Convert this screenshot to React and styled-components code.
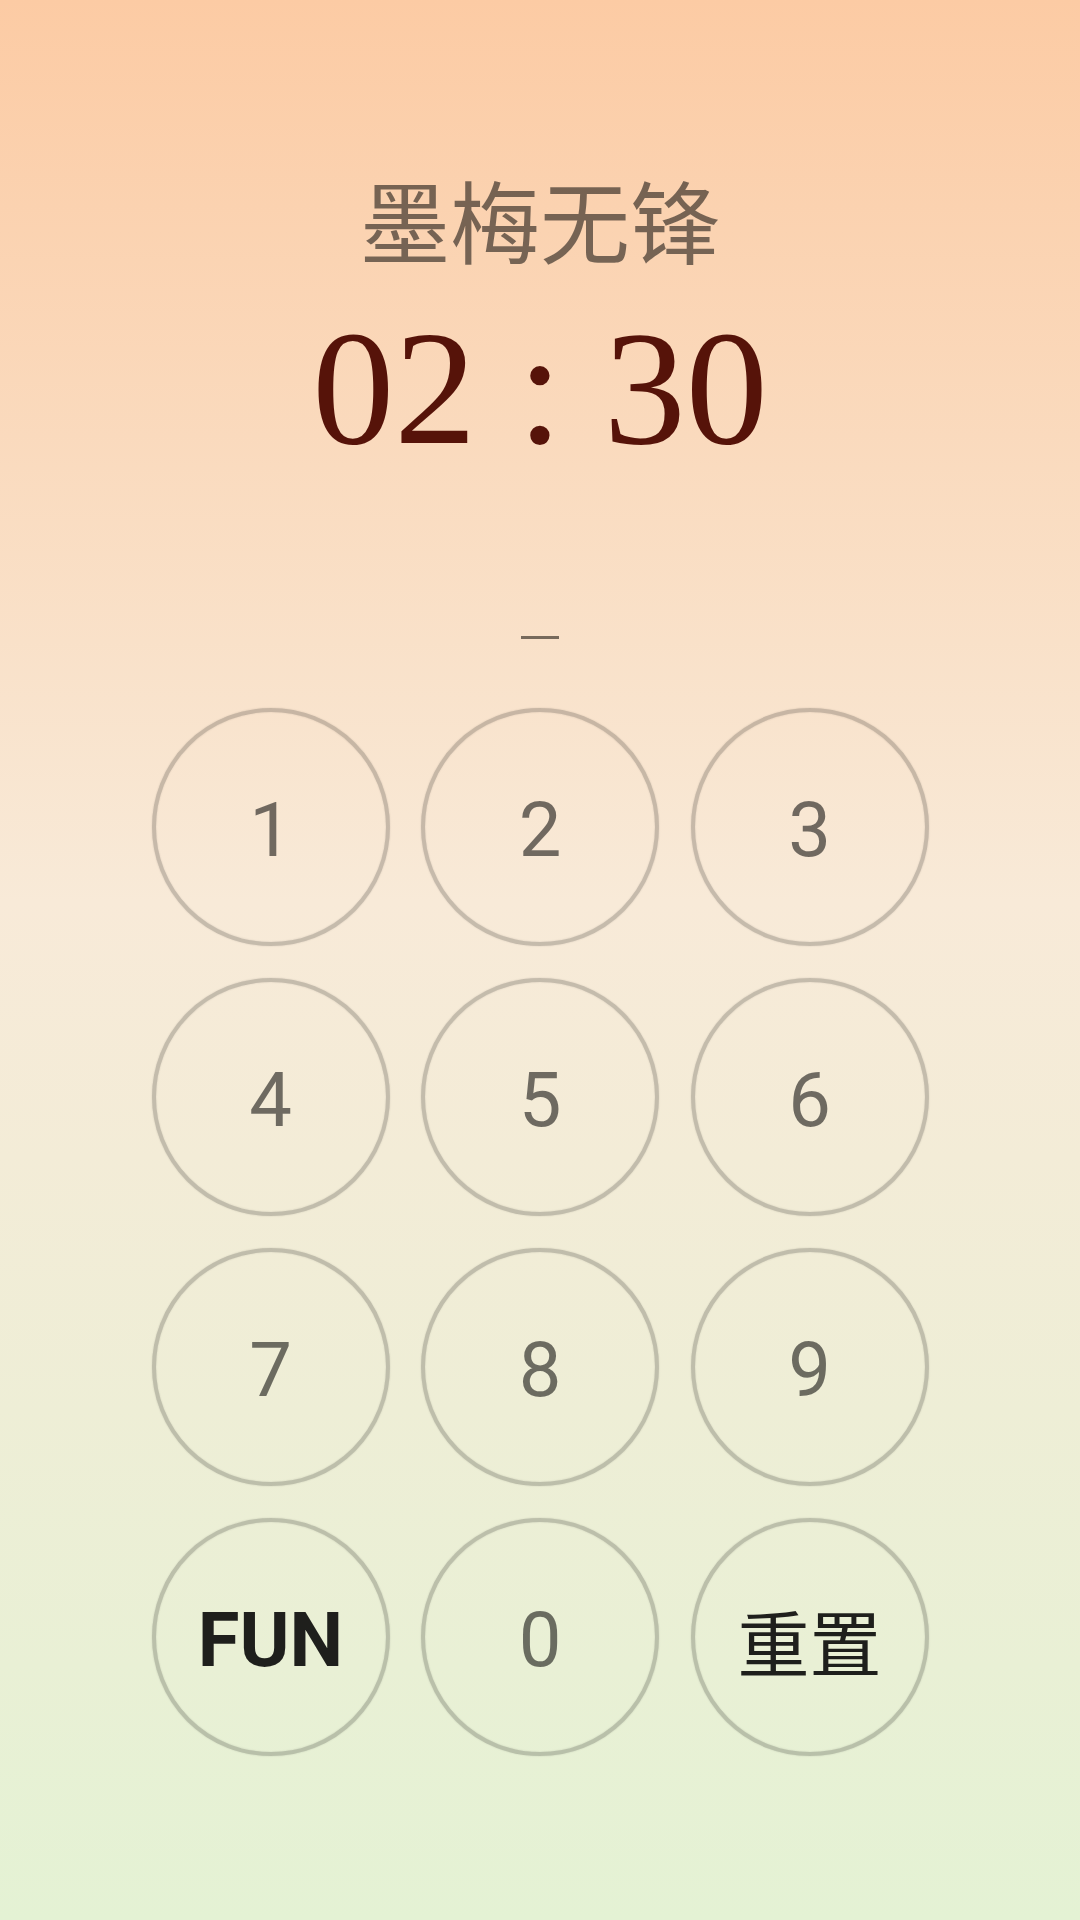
import styled, { createGlobalStyle } from "styled-components";

const GlobalStyle = createGlobalStyle`
  html, body {
    margin: 0;
    padding: 0;
  }
  body {
    font-family: Roboto, "Noto Sans", sans-serif;
  }
`;

const Page = styled.div`
  width: 1080px;
  height: 1920px;
  display: flex;
  flex-direction: column;
  align-items: center;
  background: linear-gradient(
    180deg,
    #fccba4 0%,
    #f8ead8 47%,
    #e4f2d4 100%
  );
  overflow: hidden;
`;

const Title = styled.h1`
  margin: 173px 0 0;
  font-family: "Noto Sans CJK SC", "Noto Sans", sans-serif;
  font-size: 90px;
  line-height: 90px;
  font-weight: 400;
  color: rgba(0, 0, 0, 0.53);
`;

const Timer = styled.div`
  margin-top: 43px;
  font-family: "Liberation Serif", serif;
  font-size: 164px;
  line-height: 164px;
  color: #561309;
  white-space: pre;
`;

const Cursor = styled.div`
  margin-top: 166px;
  width: 38px;
  height: 3px;
  background: #776a5c;
`;

const Pad = styled.div`
  margin-top: 69px;
  display: grid;
  grid-template-columns: repeat(3, 238px);
  grid-auto-rows: 238px;
  column-gap: 31.5px;
  row-gap: 32px;
`;

const Key = styled.button`
  box-sizing: border-box;
  width: 238px;
  height: 238px;
  padding: 6px 0 0;
  border-radius: 50%;
  border: 4px solid rgba(0, 0, 0, 0.2);
  box-shadow: 0 0 2px rgba(0, 0, 0, 0.14), inset 0 0 2px rgba(0, 0, 0, 0.12);
  background: transparent;
  display: flex;
  align-items: center;
  justify-content: center;
  font-family: ${(p) =>
    p.$cjk ? '"Noto Sans CJK SC", "Noto Sans", sans-serif' : 'Roboto, "Noto Sans", sans-serif'};
  font-size: ${(p) => (p.$cjk ? "72px" : "76px")};
  font-weight: ${(p) => (p.$bold ? 700 : 400)};
  line-height: 1;
  color: ${(p) => (p.$dark ? "rgba(0, 0, 0, 0.87)" : "rgba(0, 0, 0, 0.55)")};
  cursor: pointer;
`;

const keys = [
  { label: "1" },
  { label: "2" },
  { label: "3" },
  { label: "4" },
  { label: "5" },
  { label: "6" },
  { label: "7" },
  { label: "8" },
  { label: "9" },
  { label: "FUN", bold: true, dark: true },
  { label: "0" },
  { label: "重置", cjk: true, dark: true },
];

export default function App() {
  return (
    <>
      <GlobalStyle />
      <Page>
        <Title>墨梅无锋</Title>
        <Timer>02 : 30</Timer>
        <Cursor />
        <Pad>
          {keys.map((k) => (
            <Key key={k.label} type="button" $bold={k.bold} $dark={k.dark} $cjk={k.cjk}>
              {k.label}
            </Key>
          ))}
        </Pad>
      </Page>
    </>
  );
}
